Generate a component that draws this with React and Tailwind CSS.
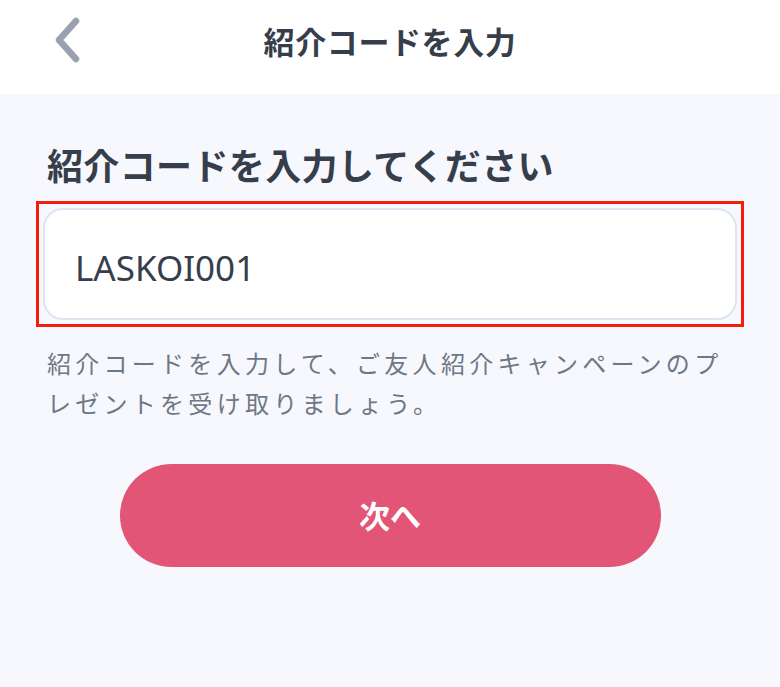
import React from 'react';

const jp = { fontFamily: '"Noto Sans CJK JP", "Noto Sans", sans-serif' };

const BackIcon = () => (
  <svg width="32" height="46" viewBox="0 0 32 46" fill="none">
    <path d="M26 4 L9 23 L26 42" stroke="#9aa2b1" strokeWidth="6.5" strokeLinecap="round" strokeLinejoin="round" />
  </svg>
);

export default function App() {
  return (
    <div className="w-[780px] h-[687px] bg-[#f7f8fd] flex flex-col" style={jp}>
      {/* header */}
      <div className="h-[94px] bg-white relative flex items-center justify-center">
        <button type="button" className="absolute left-[50px] top-[17px]">
          <BackIcon />
        </button>
        <h1 className="text-[31px] font-bold text-[#363e4b] tracking-[0.02em] -mt-[12px]">紹介コードを入力</h1>
      </div>

      {/* body */}
      <div className="flex flex-col px-[36px] pt-[47px]">
        <h2 className="pl-[11px] text-[36px] leading-[46px] font-bold text-[#363e4b] tracking-[0.01em]">
          紹介コードを入力してください
        </h2>

        <div className="mt-[14px] border-[3px] border-[#f41c0a] p-[4px] w-[708px]">
          <div className="h-[112px] bg-white border-2 border-[#dfe5ee] rounded-[20px] flex items-center pl-[30px] pt-[8px]">
            <span className="text-[35px] text-[#363e4b]" style={{ fontFamily: '"Noto Sans", sans-serif' }}>LASKOI001</span>
          </div>
        </div>

        <p className="mt-[16px] pl-[11px] pr-[12px] text-[24px] leading-[40px] tracking-[0.178em] text-[#6e7785]">
          紹介コードを入力して、ご友人紹介キャンペーンのプレゼントを受け取りましょう。
        </p>

        <div className="flex justify-center mt-[41px]">
          <button type="button" className="w-[541px] h-[103px] rounded-full bg-[#e25577] text-white text-[31px] font-bold">
            次へ
          </button>
        </div>
      </div>
    </div>
  );
}
